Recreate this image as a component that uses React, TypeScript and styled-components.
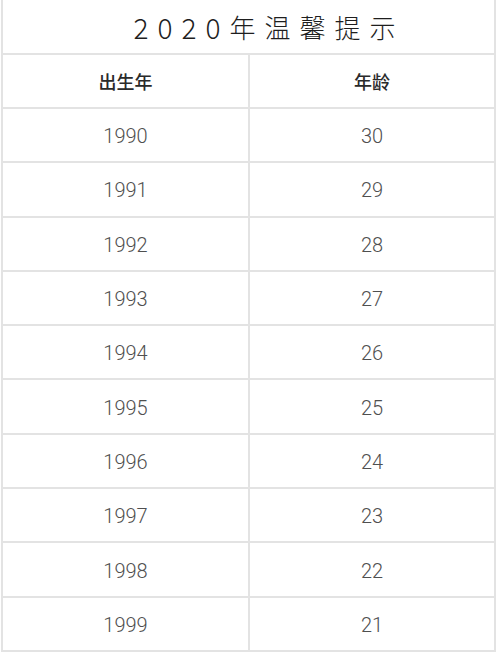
import styled, { createGlobalStyle } from "styled-components";

const GlobalStyle = createGlobalStyle`
  html, body {
    margin: 0;
    padding: 0;
    background: #fff;
  }
`;

const Sheet = styled.div`
  box-sizing: border-box;
  width: 495px;
  margin-left: 1px;
  border-left: 2px solid #e3e3e3;
  border-right: 2px solid #e3e3e3;
  border-bottom: 2px solid #e3e3e3;
`;

const Title = styled.div`
  height: 53px;
  display: flex;
  align-items: center;
  justify-content: center;
  border-bottom: 2px solid #e3e3e3;
  font-family: "Noto Sans CJK SC", sans-serif;
  font-weight: 300;
  font-size: 26px;
  letter-spacing: 9px;
  padding-left: 41px;
  color: #1e1e1e;
`;

const Digits = styled.span`
  font-size: 28px;
  letter-spacing: 9px;
`;

const Row = styled.div<{ last?: boolean; head?: boolean }>`
  display: grid;
  grid-template-columns: 245px 1fr;
  height: ${(p) => (p.head ? "52px" : "52.3px")};
  border-bottom: ${(p) => (p.last ? "none" : "2px solid #e3e3e3")};
`;

const Cell = styled.div<{ head?: boolean }>`
  box-sizing: border-box;
  display: flex;
  align-items: center;
  justify-content: center;
  padding-top: ${(p) => (p.head ? "0" : "2px")};
  & + & {
    border-left: 2px solid #e3e3e3;
  }
  font-family: ${(p) =>
    p.head ? `"Noto Sans CJK SC", sans-serif` : `Roboto, "Noto Sans", sans-serif`};
  font-weight: ${(p) => (p.head ? 500 : 300)};
  font-size: ${(p) => (p.head ? "18px" : "20px")};
  color: ${(p) => (p.head ? "#2a2a2a" : "#4f4f4f")};
`;

const years = [1990, 1991, 1992, 1993, 1994, 1995, 1996, 1997, 1998, 1999];

export default function App() {
  return (
    <>
      <GlobalStyle />
      <Sheet>
        <Title>
          <Digits>2020</Digits>年温馨提示
        </Title>
        <Row head>
          <Cell head>出生年</Cell>
          <Cell head>年龄</Cell>
        </Row>
        {years.map((y, i) => (
          <Row key={y} last={i === years.length - 1}>
            <Cell>{y}</Cell>
            <Cell>{2020 - y}</Cell>
          </Row>
        ))}
      </Sheet>
    </>
  );
}
